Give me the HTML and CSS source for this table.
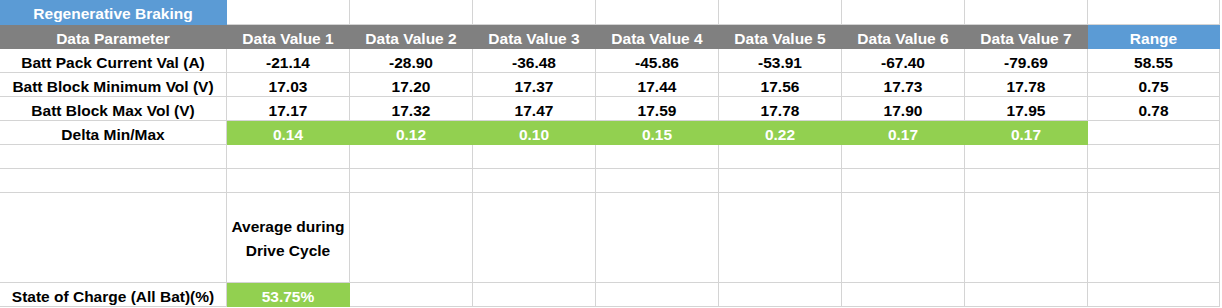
FILE: index.html
```html
<!DOCTYPE html>
<html lang="en">
<head>
<meta charset="utf-8">
<title>Regenerative Braking</title>
<link rel="stylesheet" href="styles.css">
</head>
<body>
<div class="sheet">
  <div class="c blue hd">Regenerative Braking</div>
  <div class="c"></div><div class="c"></div><div class="c"></div><div class="c"></div><div class="c"></div><div class="c"></div><div class="c"></div><div class="c"></div>

  <div class="c gray hd">Data Parameter</div>
  <div class="c gray hd">Data Value 1</div>
  <div class="c gray hd">Data Value 2</div>
  <div class="c gray hd">Data Value 3</div>
  <div class="c gray hd">Data Value 4</div>
  <div class="c gray hd">Data Value 5</div>
  <div class="c gray hd">Data Value 6</div>
  <div class="c gray hd">Data Value 7</div>
  <div class="c blue hd">Range</div>

  <div class="c">Batt Pack Current Val (A)</div>
  <div class="c">-21.14</div>
  <div class="c">-28.90</div>
  <div class="c">-36.48</div>
  <div class="c">-45.86</div>
  <div class="c">-53.91</div>
  <div class="c">-67.40</div>
  <div class="c">-79.69</div>
  <div class="c">58.55</div>

  <div class="c">Batt Block Minimum Vol (V)</div>
  <div class="c">17.03</div>
  <div class="c">17.20</div>
  <div class="c">17.37</div>
  <div class="c">17.44</div>
  <div class="c">17.56</div>
  <div class="c">17.73</div>
  <div class="c">17.78</div>
  <div class="c">0.75</div>

  <div class="c">Batt Block Max Vol (V)</div>
  <div class="c">17.17</div>
  <div class="c">17.32</div>
  <div class="c">17.47</div>
  <div class="c">17.59</div>
  <div class="c">17.78</div>
  <div class="c">17.90</div>
  <div class="c">17.95</div>
  <div class="c">0.78</div>

  <div class="c">Delta Min/Max</div>
  <div class="c green hd">0.14</div>
  <div class="c green hd">0.12</div>
  <div class="c green hd">0.10</div>
  <div class="c green hd">0.15</div>
  <div class="c green hd">0.22</div>
  <div class="c green hd">0.17</div>
  <div class="c green hd">0.17</div>
  <div class="c"></div>

  <div class="c"></div><div class="c"></div><div class="c"></div><div class="c"></div><div class="c"></div><div class="c"></div><div class="c"></div><div class="c"></div><div class="c"></div>

  <div class="c"></div><div class="c"></div><div class="c"></div><div class="c"></div><div class="c"></div><div class="c"></div><div class="c"></div><div class="c"></div><div class="c"></div>

  <div class="c"></div>
  <div class="c wrap">Average during Drive Cycle</div>
  <div class="c"></div><div class="c"></div><div class="c"></div><div class="c"></div><div class="c"></div><div class="c"></div><div class="c"></div>

  <div class="c">State of Charge (All Bat)(%)</div>
  <div class="c green hd">53.75%</div>
  <div class="c"></div><div class="c"></div><div class="c"></div><div class="c"></div><div class="c"></div><div class="c"></div><div class="c"></div>
</div>
</body>
</html>
```

FILE: styles.css
```css
html, body {
  margin: 0;
  padding: 0;
  background: #ffffff;
}

.sheet {
  display: grid;
  grid-template-columns: 227px repeat(7, 123px) 132px;
  grid-template-rows: 25px repeat(7, 24px) 90px 24px;
  width: 1220px;
  font-family: "Liberation Sans", Arial, sans-serif;
  font-weight: bold;
  font-size: 15.5px;
  color: #000000;
}

.c {
  box-sizing: border-box;
  display: flex;
  justify-content: center;
  align-items: flex-start;
  padding-top: 4px;
  line-height: 19px;
  white-space: nowrap;
  overflow: hidden;
  border-right: 1px solid #d4d4d4;
  border-bottom: 1px solid #d4d4d4;
}

.hd {
  color: #ffffff;
}

.blue {
  background: #5b9bd5;
  border-color: #5b9bd5;
}

.gray {
  background: #808080;
  border-color: #808080;
}

.green {
  background: #92d050;
  border-color: #92d050;
}

.wrap {
  white-space: normal;
  text-align: center;
  align-items: center;
  padding: 2px 2px 0;
  line-height: 24px;
}
```
